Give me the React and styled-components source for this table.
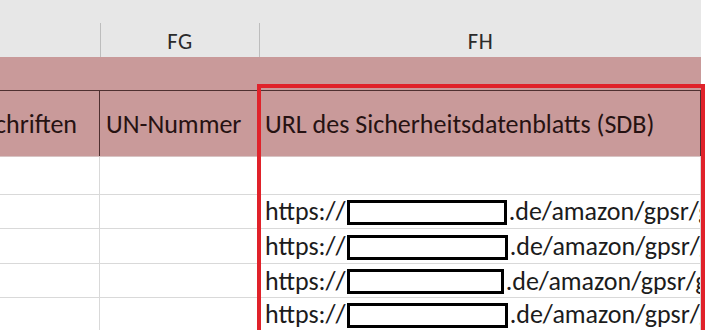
import React from "react";
import styled, { createGlobalStyle } from "styled-components";

const GlobalStyle = createGlobalStyle`
  html, body {
    margin: 0;
    padding: 0;
    background: #ffffff;
  }
  body {
    font-family: "Carlito", "Lato", "Liberation Sans", sans-serif;
    color: #1c1c1c;
  }
`;

const COLS = "100px 159px 442px";

const Viewport = styled.div`
  position: relative;
  width: 712px;
  height: 330px;
  overflow: hidden;
  background: #ffffff;
`;

const Sheet = styled.div`
  width: 701px;
  display: flex;
  flex-direction: column;
`;

const TopStrip = styled.div`
  height: 23px;
  background: #e7e7e7;
`;

const ColumnHeaderRow = styled.div`
  display: grid;
  grid-template-columns: ${COLS};
  height: 34px;
  background: #e7e7e7;
`;

const ColumnLetter = styled.div`
  display: flex;
  align-items: center;
  justify-content: center;
  padding-top: 2px;
  font-size: 22.5px;
  letter-spacing: 0.5px;
  color: #2b2b2b;
  border-left: ${(p) => (p.$first ? "none" : "1px solid #bdbdbd")};
`;

const TitleBand = styled.div`
  height: 33px;
  background: #c99a9a;
  border-bottom: 1px solid #4e3030;
`;

const HeaderRow = styled.div`
  display: grid;
  grid-template-columns: ${COLS};
  height: 65px;
  background: #c99a9a;
  border-bottom: 1px solid #d8c4c4;
`;

const HeaderCell = styled.div`
  display: flex;
  align-items: center;
  justify-content: ${(p) => (p.$clipStart ? "flex-end" : "flex-start")};
  overflow: hidden;
  white-space: nowrap;
  padding: 0 ${(p) => (p.$clipStart ? "22px" : "6px")} 0 6px;
  font-size: 26px;
  color: #261212;
  border-right: 1px solid #4e3030;
`;

const DataRow = styled.div`
  display: grid;
  grid-template-columns: ${COLS};
  height: ${(p) => p.$h}px;
  border-bottom: 1px solid #d9d9d9;
  box-sizing: border-box;
`;

const DataCell = styled.div`
  display: flex;
  align-items: flex-end;
  overflow: hidden;
  white-space: nowrap;
  padding: 0 0 3px 6px;
  font-size: 26px;
  line-height: 26px;
  color: #1c1c1c;
  border-right: 1px solid #d9d9d9;
`;

const Redacted = styled.span`
  display: inline-block;
  box-sizing: border-box;
  width: ${(p) => p.$w}px;
  height: 25px;
  margin: 0 2px 0 ${(p) => p.$ml}px;
  border: 3.5px solid #000000;
  background: #ffffff;
  vertical-align: ${(p) => p.$va}px;
`;

const Highlight = styled.div`
  position: absolute;
  left: 257px;
  top: 84px;
  width: 448px;
  height: 260px;
  box-sizing: border-box;
  border: 4.5px solid #e0222a;
  pointer-events: none;
`;

const urlRows = [
  { h: 34, w: 160, ml: 1, va: -5 },
  { h: 35, w: 161, ml: 1, va: -5 },
  { h: 34, w: 157, ml: 1, va: -4 },
  { h: 34, w: 161, ml: 1, va: -5 },
];

export default function App() {
  return (
    <>
      <GlobalStyle />
      <Viewport>
        <Sheet>
          <TopStrip />
          <ColumnHeaderRow>
            <ColumnLetter $first />
            <ColumnLetter>FG</ColumnLetter>
            <ColumnLetter>FH</ColumnLetter>
          </ColumnHeaderRow>
          <TitleBand />
          <HeaderRow>
            <HeaderCell $clipStart>Vorschriften</HeaderCell>
            <HeaderCell>UN-Nummer</HeaderCell>
            <HeaderCell>URL des Sicherheitsdatenblatts (SDB)</HeaderCell>
          </HeaderRow>
          <DataRow $h={38}>
            <DataCell />
            <DataCell />
            <DataCell />
          </DataRow>
          {urlRows.map((r, i) => (
            <DataRow key={i} $h={r.h}>
              <DataCell />
              <DataCell />
              <DataCell>
                <span>
                  https://
                  <Redacted $w={r.w} $ml={r.ml} $va={r.va} />
                  .de/amazon/gpsr/gpsr-datenblatt
                </span>
              </DataCell>
            </DataRow>
          ))}
        </Sheet>
        <Highlight />
      </Viewport>
    </>
  );
}
